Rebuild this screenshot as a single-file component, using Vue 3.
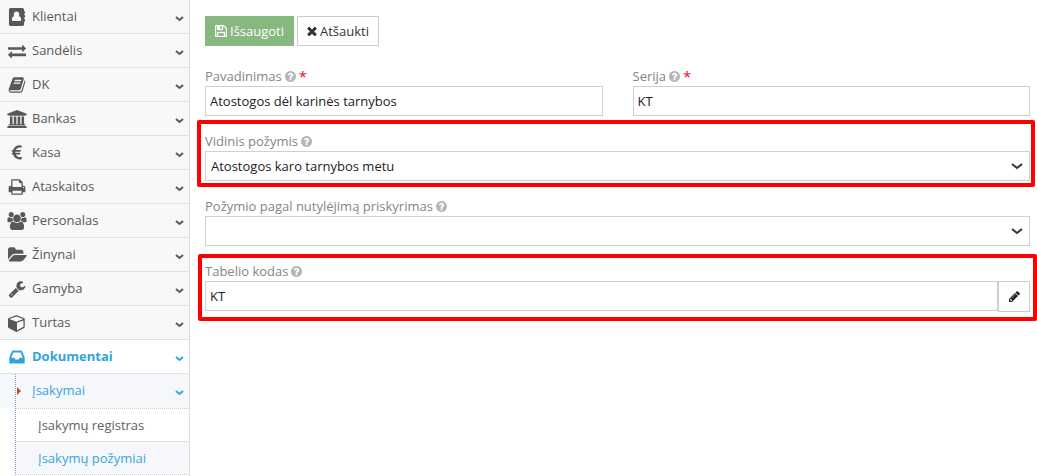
<script setup>
import { ref } from 'vue'

const title = ref('Atostogos dėl karinės tarnybos')
const series = ref('KT')
const kind = ref('Atostogos karo tarnybos metu')
const fallback = ref('')
const code = ref('KT')

const icons = {
  contacts: {
    box: '0 0 1792 1792',
    d: 'M256 0h1184q66 0 113 47t47 113v160h64q32 0 32 32v192q0 32-32 32h-64v128h64q32 0 32 32v192q0 32-32 32h-64v128h64q32 0 32 32v192q0 32-32 32h-64v288q0 66-47 113t-113 47h-1184q-66 0-113-47t-47-113v-1472q0-66 47-113t113-47zM848 352q-116 0-196 80t-80 196q0 100 60 172-136 20-190 120t-54 244q0 60 40 100t100 40h640q60 0 100-40t40-100q0-144-54-244t-190-120q60-72 60-172 0-116-80-196t-196-80z',
  },
  exchange: {
    box: '0 0 1792 1792',
    d: 'M1792 1184v192q0 13-9.500 22.500t-22.500 9.500h-1376v192q0 13-9.500 22.500t-22.500 9.500q-12 0-24-10l-319-320q-9-9-9-22 0-14 9-23l320-320q9-9 23-9 13 0 22.500 9.500t9.500 22.500v192h1376q13 0 22.500 9.500t9.500 22.500zm0-544q0 14-9 23l-320 320q-9 9-23 9-13 0-22.500-9.500t-9.500-22.500v-192h-1376q-13 0-22.500-9.500t-9.500-22.500v-192q0-13 9.500-22.500t22.500-9.500h1376v-192q0-14 9-23t23-9q12 0 24 10l319 319q9 9 9 23z',
  },
  book: {
    box: '0 0 1792 1792',
    d: 'M1703 478q40 57 18 129l-275 906q-19 64-76.500 107.500t-122.500 43.500h-923q-77 0-148.500-53.500t-99.500-131.500q-24-67-2-127 0-4 3-27t4-37q1-8-3-21.500t-3-19.500q2-11 8-21t16.500-23.500 16.500-23.500q23-38 45-91.500t30-91.500q3-10 .5-30t-.5-28q3-11 17-28t17-23q21-36 42-92t25-90q1-9-2.500-32t.5-28q4-13 22-30.500t22-22.500q19-26 42.500-84.500t27.500-96.500q1-8-3-25.500t-2-26.500q2-8 9-18t18-23 17-21q8-12 16.500-30.500t15-35 16-36 19.500-32 26.500-23.500 36-11.500 47.500 5.500l-1 3q38-9 51-9h761q74 0 114 56t18 130l-274 906q-36 119-71.500 153.500t-128.500 34.500h-869q-27 0-38 15-11 16-1 43 24 70 144 70h923q29 0 56-15.500t35-41.500l300-987q7-22 5-57 38 15 59 43zm-1064 2q-4 13 2 22.500t20 9.500h608q13 0 25.500-9.500t16.500-22.500l21-64q4-13-2-22.500t-20-9.500h-608q-13 0-25.500 9.500t-16.500 22.500zm-83 256q-4 13 2 22.500t20 9.500h608q13 0 25.500-9.500t16.500-22.500l21-64q4-13-2-22.500t-20-9.500h-608q-13 0-25.500 9.500t-16.500 22.500z',
  },
  bank: {
    box: '0 0 1920 1792',
    d: 'M960 0l960 384v128h-128q0 26-20.500 45t-48.500 19h-1526q-28 0-48.500-19t-20.500-45h-128v-128zm-704 640h256v768h128v-768h256v768h128v-768h256v768h128v-768h256v768h59q28 0 48.500 19t20.500 45v64h-1664v-64q0-26 20.500-45t48.500-19h59v-768zm1595 960q28 0 48.500 19t20.500 45v128h-1920v-128q0-26 20.500-45t48.500-19h1782z',
  },
  euro: {
    box: '0 0 1792 1792',
    d: 'M1360 1307l35 159q3 12-3 22.500t-17 14.500l-5 1q-4 2-10.500 3.500t-16 4.500-21.500 5.500-25.500 5-30 5-33.500 4.500-36.500 3-38.500 1q-234 0-409-130.500t-238-351.500h-95q-13 0-22.500-9.500t-9.500-22.500v-113q0-13 9.500-22.500t22.500-9.500h66q-2-57 1-105h-67q-14 0-23-9t-9-23v-114q0-14 9-23t23-9h98q67-210 243.500-338t400.500-128q102 0 194 23 11 3 20 15 6 11 3 24l-43 159q-3 13-14 19.500t-24 2.500l-4-1q-4-1-11.500-2.500l-17.500-3.500-22.500-3.500-26-3-29-2.500-29.500-1q-126 0-226 64t-150 176h468q16 0 25 12 10 12 7 26l-24 114q-5 26-32 26h-488q-3 37 0 105h459q15 0 25 12 9 12 6 27l-24 112q-2 11-11 18.500t-20 7.500h-387q48 117 149.500 185.500t228.500 68.500q18 0 36-1.500t33.500-3.500 29.500-4.500 24.500-5 18.500-4.500l12-3 5-2q13-5 26 2 12 7 15 21z',
  },
  print: {
    box: '0 0 1792 1792',
    d: 'M448 1536h896v-256h-896v256zm0-640h896v-384h-160q-40 0-68-28t-28-68v-160h-640v640zm1152 64q0-26-19-45t-45-19-45 19-19 45 19 45 45 19 45-19 19-45zm128 0v416q0 13-9.500 22.500t-22.500 9.500h-224v160q0 40-28 68t-68 28h-960q-40 0-68-28t-28-68v-160h-224q-13 0-22.500-9.500t-9.500-22.500v-416q0-79 56.500-135.500t135.500-56.500h64v-544q0-40 28-68t68-28h672q40 0 88 20t76 48l152 152q28 28 48 76t20 88v256h64q79 0 135.500 56.500t56.500 135.500z',
  },
  users: {
    box: '0 0 1920 1792',
    d: 'M593 896q-162 5-265 128h-134q-82 0-138-40.500t-56-118.500q0-353 124-353 6 0 43.500 21t97.500 42.500 119 21.500q67 0 133-23-5 37-5 66 0 142 81 256zm1071 637q0 120-73 189.500t-194 69.500h-874q-121 0-194-69.500t-73-189.500q0-53 3.500-103.500t14-109 26.500-108.500 43-97.500 62-81 85.500-53.500 111.500-20q10 0 43 21.500t73 48 107 48 135 21.500 135-21.500 107-48 73-48 43-21.500q61 0 111.500 20t85.500 53.500 62 81 43 97.500 26.500 108.500 14 109 3.500 103.500zm-1024-1277q0 106-75 181t-181 75-181-75-75-181 75-181 181-75 181 75 75 181zm704 384q0 159-112.500 271.500t-271.500 112.500-271.500-112.500-112.500-271.500 112.500-271.500 271.500-112.500 271.500 112.500 112.500 271.500zm576 225q0 78-56 118.500t-138 40.500h-134q-103-123-265-128 81-114 81-256 0-29-5-66 66 23 133 23 59 0 119-21.500t97.500-42.500 43.500-21q124 0 124 353zm-128-609q0 106-75 181t-181 75-181-75-75-181 75-181 181-75 181 75 75 181z',
  },
  folder: {
    box: '0 0 1920 1792',
    d: 'M1943 952q0 31-31 66l-336 396q-43 51-120.500 86.500t-143.500 35.500h-1088q-34 0-60.500-13t-26.500-43q0-31 31-66l336-396q43-51 120.500-86.500t143.500-35.500h1088q34 0 60.500 13t26.500 43zm-343-344v160h-832q-94 0-197 47.500t-164 119.500l-337 396-5 6q0-4-.5-12.500t-.5-12.500v-960q0-92 66-158t158-66h320q92 0 158 66t66 158v32h544q92 0 158 66t66 158z',
  },
  wrench: {
    box: '0 0 1792 1792',
    d: 'M448 1472q0-26-19-45t-45-19-45 19-19 45 19 45 45 19 45-19 19-45zm644-420l-682 682q-37 37-90 37-52 0-91-37l-106-108q-38-36-38-90 0-53 38-91l681-681q39 98 114.500 173.500t173.500 114.500zm634-435q0 39-23 106-47 134-164.500 217.500t-258.500 83.500q-185 0-316.500-131.500t-131.500-316.500 131.500-316.500 316.500-131.500q58 0 121.500 16.500t107.500 46.500q16 11 16 28t-16 28l-293 169v224l193 107q5-3 79-48.500t135.500-81 70.500-35.500q15 0 23.500 10t8.500 25z',
  },
  cube: {
    box: '0 0 1792 1792',
    d: 'M896 1629l640-349v-636l-640 233v752zm-64-865l698-254-698-254-698 254zm832-252v768q0 35-18 65t-49 47l-704 384q-28 16-61 16t-61-16l-704-384q-31-17-49-47t-18-65v-768q0-40 23-73t61-47l704-256q22-8 44-8t44 8l704 256q38 14 61 47t23 73z',
  },
  inbox: {
    box: '0 0 1792 1792',
    d: 'M1151 960h316q-1-3-2.500-8.500t-2.500-7.500l-212-496h-708l-212 496q-1 3-2.500 8.500t-2.500 7.500h316l95 192h320zm513 30v482q0 26-19 45t-45 19h-1408q-26 0-45-19t-19-45v-482q0-62 25-123l238-552q10-25 36.500-42t52.500-17h832q26 0 52.500 17t36.500 42l238 552q25 61 25 123z',
  },
}

const menu = [
  { label: 'Klientai', icon: 'contacts' },
  { label: 'Sandėlis', icon: 'exchange' },
  { label: 'DK', icon: 'book' },
  { label: 'Bankas', icon: 'bank' },
  { label: 'Kasa', icon: 'euro' },
  { label: 'Ataskaitos', icon: 'print' },
  { label: 'Personalas', icon: 'users' },
  { label: 'Žinynai', icon: 'folder' },
  { label: 'Gamyba', icon: 'wrench' },
  { label: 'Turtas', icon: 'cube' },
  { label: 'Dokumentai', icon: 'inbox', active: true },
]

const helpPath =
  'M1024 1376v-192q0-14-9-23t-23-9h-192q-14 0-23 9t-9 23v192q0 14 9 23t23 9h192q14 0 23-9t9-23zm256-672q0-88-55.500-163t-138.500-116-170-41q-243 0-371 213-15 24 8 42l132 100q7 6 19 6 16 0 25-12 53-68 86-92 34-24 86-24 48 0 85.500 26t37.500 59q0 38-20 61t-68 45q-63 28-115.500 86.500t-52.500 125.500v36q0 14 9 23t23 9h192q14 0 23-9t9-23q0-19 21.500-49.500t54.500-49.500q32-18 49-28.500t46-35 44.500-48 28-60.500 12.500-81zm384 192q0 209-103 385.500t-279.500 279.500-385.500 103-385.500-103-279.500-279.500-103-385.500 103-385.500 279.500-279.500 385.500-103 385.500 103 279.500 279.500 103 385.500z'
</script>

<template>
  <div class="page">
    <nav class="sidebar">
      <ul class="menu">
        <li v-for="item in menu" :key="item.label" class="entry" :class="{ active: item.active }">
          <a href="#" class="link">
            <svg class="icon" :viewBox="icons[item.icon].box" aria-hidden="true">
              <path :d="icons[item.icon].d" fill-rule="evenodd" />
            </svg>
            <span class="text">{{ item.label }}</span>
            <svg class="arrow" viewBox="0 0 9 6" aria-hidden="true"><path d="M1 1L4.500 4L8 1" /></svg>
          </a>
        </li>
      </ul>
      <div class="submenu">
        <a href="#" class="group">
          <svg class="caret" viewBox="0 0 4 8" aria-hidden="true"><path d="M0 0L4 4L0 8z" /></svg>
          <span class="text">Įsakymai</span>
          <svg class="arrow" viewBox="0 0 9 6" aria-hidden="true"><path d="M1 1L4.500 4L8 1" /></svg>
        </a>
        <ul class="leaves">
          <li><a href="#" class="leaf">Įsakymų registras</a></li>
          <li><a href="#" class="leaf current">Įsakymų požymiai</a></li>
        </ul>
      </div>
    </nav>

    <main class="content">
      <form @submit.prevent>
        <div class="actions">
          <button type="submit" class="btn save">
            <svg class="btn-icon" viewBox="128 128 1536 1536" aria-hidden="true">
              <path d="M512 1536h768v-384h-768v384zm896 0h128v-896q0-14-10-38.500t-20-34.500l-281-281q-10-10-34-20t-39-10v416q0 40-28 68t-68 28h-576q-40 0-68-28t-28-68v-416h-128v1280h128v-416q0-40 28-68t68-28h832q40 0 68 28t28 68v416zm-384-928v-320q0-13-9.500-22.500t-22.500-9.500h-192q-13 0-22.500 9.500t-9.500 22.500v320q0 13 9.500 22.500t22.500 9.500h192q13 0 22.500-9.500t9.500-22.500zm640 32v928q0 40-28 68t-68 28h-1344q-40 0-68-28t-28-68v-1344q0-40 28-68t68-28h928q40 0 88 20t76 48l280 280q28 28 48 76t20 88z" />
            </svg>
            Išsaugoti
          </button>
          <button type="button" class="btn">
            <svg class="btn-icon cross" viewBox="256 256 1280 1280" aria-hidden="true">
              <path d="M1490 1322q0 40-28 68l-136 136q-28 28-68 28t-68-28l-294-294-294 294q-28 28-68 28t-68-28l-136-136q-28-28-28-68t28-68l294-294-294-294q-28-28-28-68t28-68l136-136q28-28 68-28t68 28l294 294 294-294q28-28 68-28t68 28l136 136q28 28 28 68t-28 68l-294 294 294 294q28 28 28 68z" />
            </svg>
            Atšaukti
          </button>
        </div>

        <div class="fields">
          <div class="columns">
            <div class="field">
              <div class="caption">
                <label for="title">Pavadinimas</label>
                <svg class="help" viewBox="128 128 1536 1536" aria-hidden="true"><path :d="helpPath" /></svg>
                <span class="required">*</span>
              </div>
              <input id="title" v-model="title" class="control" type="text" />
            </div>
            <div class="field">
              <div class="caption">
                <label for="series">Serija</label>
                <svg class="help" viewBox="128 128 1536 1536" aria-hidden="true"><path :d="helpPath" /></svg>
                <span class="required">*</span>
              </div>
              <input id="series" v-model="series" class="control" type="text" />
            </div>
          </div>

          <div class="field marked">
            <div class="caption">
              <label for="kind">Vidinis požymis</label>
              <svg class="help" viewBox="128 128 1536 1536" aria-hidden="true"><path :d="helpPath" /></svg>
            </div>
            <div class="picker">
              <select id="kind" v-model="kind" class="control">
                <option>Atostogos karo tarnybos metu</option>
              </select>
              <svg class="chevron" viewBox="0 0 12 8" aria-hidden="true"><path d="M1 2L6 6L11 2" /></svg>
            </div>
          </div>

          <div class="field">
            <div class="caption">
              <label for="fallback">Požymio pagal nutylėjimą priskyrimas</label>
              <svg class="help" viewBox="128 128 1536 1536" aria-hidden="true"><path :d="helpPath" /></svg>
            </div>
            <div class="picker">
              <select id="fallback" v-model="fallback" class="control">
                <option value=""></option>
              </select>
              <svg class="chevron" viewBox="0 0 12 8" aria-hidden="true"><path d="M1 2L6 6L11 2" /></svg>
            </div>
          </div>

          <div class="field marked wide">
            <div class="caption">
              <label for="code">Tabelio kodas</label>
              <svg class="help" viewBox="128 128 1536 1536" aria-hidden="true"><path :d="helpPath" /></svg>
            </div>
            <div class="joined">
              <input id="code" v-model="code" class="control" type="text" />
              <button type="button" class="edit" aria-label="Redaguoti">
                <svg class="pencil" viewBox="128 128 1536 1536" aria-hidden="true">
                  <path d="M491 1536l91-91-235-235-91 91v107h128v128h107zm523-928q0-22-22-22-10 0-17 7l-542 542q-7 7-7 17 0 22 22 22 10 0 17-7l542-542q7-7 7-17zm-54-192l416 416-832 832h-416v-416zm683 96q0 53-37 90l-166 166-416-416 166-165q36-38 90-38 53 0 91 38l235 234q37 39 37 91z" />
                </svg>
              </button>
            </div>
          </div>
        </div>
      </form>
    </main>
  </div>
</template>

<style>
body {
  margin: 0;
  background: #fff;
}
</style>

<style scoped>
.page,
.page * {
  box-sizing: border-box;
}
.page {
  display: flex;
  min-height: 100vh;
  font-family: "Open Sans", "Noto Sans", sans-serif;
  font-size: 13px;
  line-height: 20px;
  color: #393939;
}
.sidebar {
  flex: 0 0 190px;
  border-right: 1px solid #ddd;
  background: #fff;
}
ul {
  list-style: none;
  margin: 0;
  padding: 0;
}
a {
  text-decoration: none;
}
.entry {
  border-bottom: 1px solid #e2e2e2;
  background: #f8f8f8;
}
.link {
  display: flex;
  align-items: center;
  height: 33px;
  padding: 0 5px 0 7px;
  color: #585858;
}
.icon {
  flex: none;
  width: 20px;
  height: 18px;
  margin-right: 5px;
  fill: currentColor;
}
.text {
  flex: 1;
  padding-bottom: 2px;
}
.arrow {
  flex: none;
  width: 9px;
  height: 6px;
  margin-top: 4px;
  fill: none;
  stroke: currentColor;
  stroke-width: 2;
}
.entry.active {
  background: #fff;
}
.active .link {
  color: #2fa4df;
  font-weight: 700;
}
.submenu {
  position: relative;
}
.submenu::before {
  content: "";
  position: absolute;
  top: 0;
  bottom: 0;
  left: 15px;
  border-left: 1px dotted #7ba7cc;
}
.group {
  display: flex;
  align-items: center;
  height: 34px;
  padding: 0 5px 0 17px;
  background: #f5f7fa;
  color: #3aa5dc;
}
.caret {
  width: 4px;
  height: 8px;
  margin-right: 11px;
  fill: #c84a2c;
}
.leaves {
  margin-left: 16px;
}
.leaf {
  display: block;
  height: 33px;
  padding: 6px 0 6px 22px;
  border-top: 1px dotted #ccc;
  color: #616161;
}
.leaf.current {
  background: #f5f7fa;
  color: #3aa5dc;
}
.leaves li:last-child {
  border-bottom: 1px dotted #ccc;
}
.content {
  flex: 1;
  min-width: 0;
  padding: 16px 7px 16px 15px;
}
.actions {
  display: flex;
  gap: 3px;
  margin-bottom: 19px;
}
.btn {
  display: flex;
  align-items: center;
  gap: 3px;
  height: 30px;
  padding: 0 9px;
  border: 1px solid #ccc;
  background: #fff;
  color: #333;
  font: inherit;
}
.btn.save {
  border-color: #87b87f;
  background: #87b87f;
  color: #fff;
}
.btn-icon {
  width: 12px;
  height: 12px;
  fill: currentColor;
  stroke: currentColor;
  stroke-width: 40;
}
.btn-icon.cross {
  width: 10px;
  height: 10px;
  stroke: none;
}
.fields {
  display: grid;
  gap: 14px;
}
.columns {
  display: grid;
  grid-template-columns: 1fr 1fr;
  gap: 30px;
}
.field {
  position: relative;
  min-width: 0;
}
.caption {
  display: flex;
  align-items: center;
  gap: 3px;
  height: 21px;
  color: #858585;
}
.help {
  width: 11px;
  height: 11px;
  margin-top: 2px;
  fill: #b5b5b5;
}
.required {
  color: #e2142d;
  font-size: 15px;
}
.control {
  display: block;
  width: 100%;
  height: 30px;
  padding: 0 4px;
  border: 1px solid #d0d0d0;
  border-radius: 0;
  background: #fff;
  color: #222;
  font: inherit;
  appearance: none;
}
select.control {
  padding: 0 30px 0 5px;
}
.picker {
  position: relative;
}
.chevron {
  position: absolute;
  top: 11px;
  right: 7px;
  width: 12px;
  height: 8px;
  fill: none;
  stroke: #333;
  stroke-width: 2;
  pointer-events: none;
}
.joined {
  display: flex;
}
.edit {
  display: flex;
  flex: 0 0 32px;
  align-items: center;
  justify-content: center;
  height: 31px;
  padding: 0;
  border: 1px solid #ccc;
  background: #fff;
}
.pencil {
  width: 11px;
  height: 11px;
  fill: #222;
}
/* Red highlight frame laid over a field */
.marked::after {
  content: "";
  position: absolute;
  inset: -10px -5px -6px -8px;
  border: 4px solid #f00;
  border-radius: 2px;
  pointer-events: none;
}
.marked.wide::after {
  inset: -6px -7px -9px -7px;
}
</style>
